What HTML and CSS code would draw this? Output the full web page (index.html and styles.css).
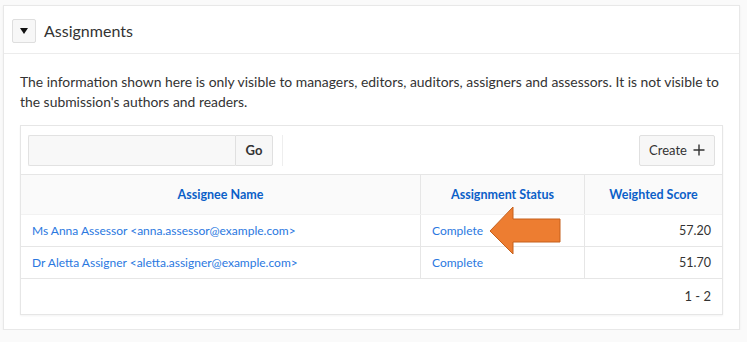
FILE: index.html
```html
<!DOCTYPE html>
<html lang="en">
<head>
    <meta charset="utf-8">
    <title>Assignments</title>
    <link rel="stylesheet" href="styles.css">
</head>
<body>
    <div class="region">
        <div class="region-header">
            <button class="toggle" type="button"><span class="caret"></span></button>
            <h2 class="region-title">Assignments</h2>
        </div>
        <div class="region-body">
            <p class="note">The information shown here is only visible to managers, editors, auditors, assigners and assessors. It is not visible to the submission's authors and readers.</p>
            <div class="report">
                <div class="toolbar">
                    <div class="search">
                        <input class="search-input" type="text">
                        <button class="btn go" type="button">Go</button>
                    </div>
                    <div class="sep"></div>
                    <button class="btn create" type="button">Create
                        <svg class="plus" width="12" height="12" viewBox="0 0 12 12"><path d="M6 0.5V11.5M0.5 6H11.5" stroke="#333" stroke-width="1.4"/></svg>
                    </button>
                </div>
                <table class="grid">
                    <thead>
                        <tr>
                            <th class="col-name">Assignee Name</th>
                            <th class="col-status">Assignment Status</th>
                            <th class="col-score">Weighted Score</th>
                        </tr>
                    </thead>
                    <tbody>
                        <tr>
                            <td><a href="#">Ms Anna Assessor &lt;anna.assessor@example.com&gt;</a></td>
                            <td><a href="#">Complete</a></td>
                            <td class="num">57.20</td>
                        </tr>
                        <tr>
                            <td><a href="#">Dr Aletta Assigner &lt;aletta.assigner@example.com&gt;</a></td>
                            <td><a href="#">Complete</a></td>
                            <td class="num">51.70</td>
                        </tr>
                    </tbody>
                </table>
                <div class="pager">1 - 2</div>
                <svg class="arrow" width="74" height="50" viewBox="0 0 74 50">
                    <polygon points="1,25 24,1 24,13 71,13 71,36 24,36 24,48" fill="#ed7d31" stroke="#c5601c" stroke-width="1"/>
                </svg>
            </div>
        </div>
    </div>
</body>
</html>
```

FILE: styles.css
```css
body {
    margin: 0;
    padding: 5px 7px 0 3px;
    background: #fafafa;
    font-family: Lato, "Noto Sans", sans-serif;
    color: #333;
}
.region {
    background: #fff;
    border: 1px solid #e8e8e8;
    box-shadow: 0 1px 2px rgba(0,0,0,0.06);
    height: 325px;
    box-sizing: border-box;
}
.region-header {
    display: flex;
    align-items: center;
    gap: 8px;
    height: 47px;
    padding: 0 8px;
    border-bottom: 1px solid #ececec;
}
.toggle {
    display: flex;
    align-items: center;
    justify-content: center;
    width: 24px;
    height: 24px;
    padding: 0;
    margin-top: 2px;
    border: 1px solid #dedede;
    border-radius: 2px;
    background: #f7f7f7;
}
.caret {
    width: 0;
    height: 0;
    border-left: 4px solid transparent;
    border-right: 4px solid transparent;
    border-top: 6px solid #111;
}
.region-title {
    margin: 2px 0 0 0;
    font-weight: normal;
    font-size: 16px;
    color: #333;
}
.region-body {
    padding: 18px 16px 0 16px;
}
.note {
    margin: 0 0 13px 0;
    font-size: 13.9px;
    line-height: 20px;
    color: #333;
}
.report {
    position: relative;
    border: 1px solid #e6e6e6;
    box-shadow: 0 1px 2px rgba(0,0,0,0.05);
}
.toolbar {
    display: flex;
    align-items: center;
    height: 48px;
    padding: 0 7px;
    border-bottom: 1px solid #e6e6e6;
}
.search {
    display: flex;
    height: 31px;
}
.search-input {
    width: 207px;
    height: 31px;
    box-sizing: border-box;
    border: 1px solid #e2e2e2;
    border-right: 0;
    border-radius: 2px 0 0 2px;
    background: #f8f8f8;
    margin: 0;
}
.btn {
    height: 31px;
    box-sizing: border-box;
    border: 1px solid #e0e0e0;
    border-radius: 2px;
    background: #f7f7f7;
    font-family: inherit;
    font-size: 13px;
    color: #333;
    padding: 0 10px;
}
.go {
    width: 38px;
    font-weight: bold;
    border-radius: 0 2px 2px 0;
    padding: 0;
}
.sep {
    width: 1px;
    height: 31px;
    background: #eeeeee;
    margin-left: 9px;
}
.create {
    display: flex;
    align-items: center;
    justify-content: center;
    gap: 6px;
    margin-left: auto;
    width: 76px;
    padding: 0;
}
.grid {
    width: 100%;
    border-collapse: collapse;
    font-size: 12px;
}
.grid th {
    height: 39px;
    padding: 0 10px;
    background: #fafafa;
    color: #0b5fc8;
    font-size: 12.5px;
    font-weight: bold;
    text-align: center;
    border-left: 1px solid #e6e6e6;
    border-bottom: 1px solid #f2f2f2;
}
.grid th:first-child {
    border-left: 0;
}
.col-name { width: 379px; }
.col-status { width: 143px; }
.grid td {
    height: 31px;
    padding: 0 11px;
    border-left: 1px solid #e6e6e6;
    border-bottom: 1px solid #e6e6e6;
}
.grid td:first-child {
    border-left: 0;
}
.grid a {
    color: #2a78df;
    text-decoration: none;
}
.num {
    text-align: right;
    font-size: 12.5px;
}
.pager {
    height: 35px;
    line-height: 35px;
    text-align: right;
    padding-right: 11px;
    font-size: 13px;
}
.arrow {
    position: absolute;
    left: 468px;
    top: 80px;
}
```
